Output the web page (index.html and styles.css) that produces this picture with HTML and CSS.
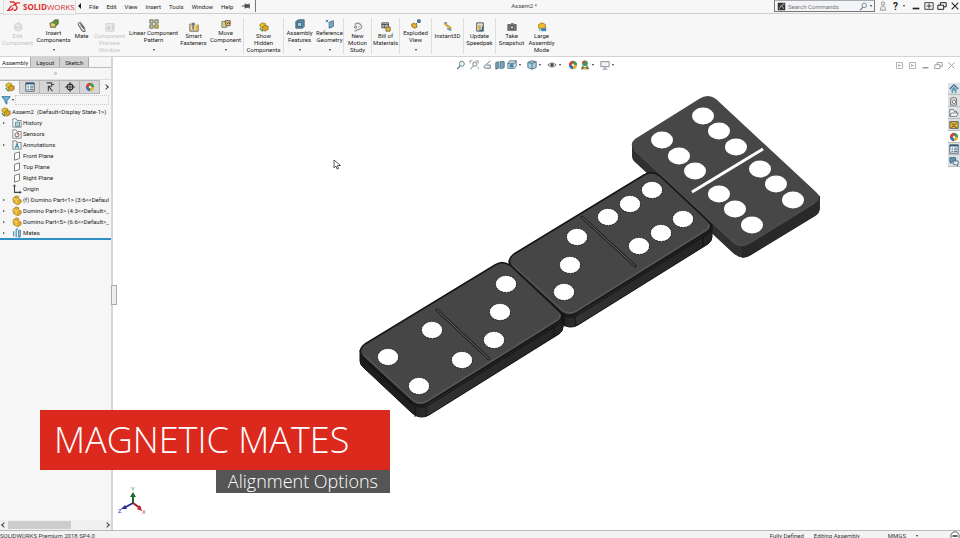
FILE: index.html
```
<!DOCTYPE html>
<html lang="en">
<head>
    <meta charset="utf-8">
    <title>Assem2 - SOLIDWORKS</title>
    <link rel="stylesheet" href="styles.css">
</head>
<body>
    <!-- icon sprite -->
    <svg class="sprite">
        <symbol id="i-part" viewBox="0 0 12 12"><path d="M1 4l4-3 3 1v3l3 1v3l-4 3-5-3z" fill="#e3ac27" stroke="#8a6414" stroke-width=".7"/><path d="M1 4l4 2 3-1M5 6v4" fill="none" stroke="#fbe08a"/></symbol>
        <symbol id="i-asm" viewBox="0 0 12 12"><path d="M4 1l4 1v4l-4 1-3-2V3z" fill="#e8c02d" stroke="#8a6a18" stroke-width=".7"/><path d="M7 4l4 1v4L7 11 4 9V6z" fill="#d9a520" stroke="#6d5a22" stroke-width=".7"/><path d="M1 7l2 3 2 1" fill="none" stroke="#4d8a50" stroke-width="1.5"/></symbol>
        <symbol id="i-folder" viewBox="0 0 12 12"><path d="M1 11V1h4l1 2h5v8z" fill="#fff" stroke="#777"/><path d="M4 5h5v5H4z" fill="#dcebf4" stroke="#3f7696"/><path d="M5.500 7h2M5.500 8.500h2" stroke="#3f7696" stroke-width=".7"/></symbol>
        <symbol id="i-sensor" viewBox="0 0 12 12"><path d="M1 11V1h4l1 2h5v8z" fill="#fff" stroke="#777"/><circle cx="6" cy="7" r="2.500" fill="none" stroke="#444"/><path d="M6 7l2-2" stroke="#b33"/></symbol>
        <symbol id="i-note" viewBox="0 0 12 12"><path d="M1 11V1h4l1 2h5v8z" fill="#e9f3f8" stroke="#777"/><path d="M4 10l2-6 2 6M4.500 8h3" fill="none" stroke="#1f6d97"/></symbol>
        <symbol id="i-plane" viewBox="0 0 12 12"><path d="M3 3l6-2v8l-6 2z" fill="#fff" stroke="#666"/></symbol>
        <symbol id="i-origin" viewBox="0 0 12 12"><path d="M3 1v9h8" fill="none" stroke="#444" stroke-width="1.300"/><path d="M1.500 3L3 1l1.500 2M9 8.500L11 10l-2 1.500" fill="none" stroke="#444"/></symbol>
        <symbol id="i-mates" viewBox="0 0 12 12"><path d="M2 10V4M5 11V3q0-2 2-2M8 11V4q0-2 2-1v6q0 2-2 2" fill="none" stroke="#4389b5" stroke-width="1.400"/></symbol>
        <symbol id="i-clip" viewBox="0 0 12 12"><path d="M4 3l5 6q1.500 2 0 2.500T6 10L2 4q-1-2 .5-3T5 2l4.500 6" fill="none" stroke="#666" stroke-width="1.300"/></symbol>
        <symbol id="i-insert" viewBox="0 0 12 12"><path d="M1 5l4-1h4l-1 6H2z" fill="#c9bd62" stroke="#5d5f2a"/><path d="M4 4l3-3h4v5l-3 2" fill="#6f8f3c" stroke="#44662a"/><path d="M3 7h4" stroke="#f3e9a0"/></symbol>
        <symbol id="i-faded" viewBox="0 0 12 12"><path d="M1 2h10v9H1z" fill="#e9e9e9" stroke="#ccc"/><path d="M3 5h3v4H3zM8 4h2v5H8z" fill="#ccc"/></symbol>
        <symbol id="i-fadedpart" viewBox="0 0 12 12"><path d="M3 2l4-1 3 2v3l1 2-4 3-5-2V6z" fill="#e6e6e6" stroke="#ccc"/><path d="M3 6l4 1 3-1" fill="none" stroke="#ccc"/></symbol>
        <symbol id="i-pattern" viewBox="0 0 12 12"><path d="M1 1h4v4H1zM7 1h4v4H7zM1 7h4v4H1z" fill="#c7cfb0" stroke="#59654a"/><path d="M7 7h4v4H7z" fill="#ecc53f" stroke="#59654a"/></symbol>
        <symbol id="i-fasten" viewBox="0 0 12 12"><path d="M1 2v9h10V3" fill="#e8d9a0" stroke="#555"/><path d="M3 1h4v3H6v5H4V4H3z" fill="#777"/><path d="M8 4h3v5H8z" fill="#e5b52c"/></symbol>
        <symbol id="i-move" viewBox="0 0 12 12"><path d="M1 3h6v7H1z" fill="#d8c88e" stroke="#777"/><path d="M5 2h6v6H6z" fill="#eebc55" stroke="#555"/><path d="M7 6l2-2 2 2" fill="none" stroke="#333"/></symbol>
        <symbol id="i-feature" viewBox="0 0 12 12"><path d="M1 3l3-2h7v8l-2 2H1z" fill="#5a8fae" stroke="#35586d"/><path d="M3 4h5v5H3z" fill="#a9cadb" stroke="#35586d"/></symbol>
        <symbol id="i-geometry" viewBox="0 0 12 12"><path d="M5 4l5-2v7l-5 2z" fill="#76abc8" stroke="#326582"/><path d="M1 1l3 3M4 1L1 4" stroke="#326582"/></symbol>
        <symbol id="i-motion" viewBox="0 0 12 12"><path d="M2 3q4-3 7 0t0 5l-7 3" fill="none" stroke="#999" stroke-width="1.500"/><circle cx="3" cy="6" r="1.500" fill="#ccc" stroke="#777"/><path d="M6 7l3-3" stroke="#c98e72"/></symbol>
        <symbol id="i-bom" viewBox="0 0 12 12"><path d="M1 1h8v6H1z" fill="#b7c4cc" stroke="#444"/><path d="M1 3h8M4 3v4" stroke="#444"/><path d="M6 6h5v5H6z" fill="#e2bc42" stroke="#6d5a22"/></symbol>
        <symbol id="i-explode" viewBox="0 0 12 12"><path d="M1 6l3-1 3 2v3l-3 1-3-2z" fill="#e5b52c" stroke="#8a6414"/><path d="M8 1h3v3H8z" fill="#4d86ad" stroke="#2d5673"/><path d="M6 6l2-2" stroke="#555"/></symbol>
        <symbol id="i-instant" viewBox="0 0 12 12"><path d="M2 1l8 6-1 2-7-6z" fill="#e9bd33" stroke="#9a7617" stroke-width=".7"/><path d="M5 8l5 2M2 1h3" stroke="#4c87a8" stroke-width="1.500"/></symbol>
        <symbol id="i-update" viewBox="0 0 12 12"><path d="M2 1h8v10H2z" fill="#d9e0e2" stroke="#444"/><path d="M4 4h3v5H4z" fill="#dba923"/><path d="M9 5v5H5" fill="none" stroke="#2e6d93" stroke-width="1.500"/></symbol>
        <symbol id="i-camera" viewBox="0 0 12 12"><path d="M1 3h3l1-1h3l1 1h2v7H1z" fill="#777" stroke="#555"/><circle cx="6" cy="6.500" r="2" fill="#ddd" stroke="#333"/></symbol>
        <symbol id="i-large" viewBox="0 0 12 12"><path d="M2 3l4-2 4 2v4l-4 2-4-2z" fill="#f0bd28" stroke="#a57712"/><path d="M5 7h6v4H5z" fill="#438ab0"/><path d="M2 8l2 3" stroke="#438ab0"/></symbol>
        <symbol id="i-list" viewBox="0 0 12 12"><path d="M1 1h10v10H1z" fill="#fff" stroke="#345"/><path d="M1 2h10" stroke="#2d5f80" stroke-width="2"/><path d="M3 5h2M6 5h4M3 7h2M6 7h4M3 9h2M6 9h4" stroke="#2d5f80"/></symbol>
        <symbol id="i-config" viewBox="0 0 12 12"><path d="M2 1h6v4H4v6M4 5l5 6M8 3h3" fill="none" stroke="#444" stroke-width="1.300"/></symbol>
        <symbol id="i-target" viewBox="0 0 12 12"><circle cx="6" cy="6" r="3.500" fill="none" stroke="#222" stroke-width="1.300"/><path d="M6 0v12M0 6h12" stroke="#222"/></symbol>
        <symbol id="i-ball" viewBox="0 0 12 12"><path d="M6 6V1a5 5 0 0 1 5 5z" fill="#3e9e58"/><path d="M6 6h5a5 5 0 0 1-5 5z" fill="#e0b32f"/><path d="M6 6v5a5 5 0 0 1-5-5z" fill="#3b71ae"/><path d="M6 6H1a5 5 0 0 1 5-5z" fill="#d94434"/><circle cx="6" cy="6" r="1.500" fill="#f4e8e4"/></symbol>
        <symbol id="i-funnel" viewBox="0 0 12 12"><path d="M1 2h10L7 7v4L5 9V7z" fill="#76b5da" stroke="#1f6592"/></symbol>
        <symbol id="i-zoom" viewBox="0 0 12 12"><circle cx="7" cy="4.500" r="3" fill="#edf5f9" stroke="#56707f"/><path d="M5 7l-3.500 4" stroke="#56707f" stroke-width="1.500"/></symbol>
        <symbol id="i-zoomarea" viewBox="0 0 12 12"><path d="M1 4V1h3M8 1h3v3M11 8v3" fill="none" stroke="#888"/><circle cx="7" cy="5" r="2.500" fill="#fff" stroke="#56707f"/><path d="M5 7l-3 4" stroke="#56707f"/></symbol>
        <symbol id="i-prev" viewBox="0 0 12 12"><path d="M10 1L3 7q-2 2 1 3h6V6H6" fill="#dfe8ec" stroke="#5f7782"/></symbol>
        <symbol id="i-section" viewBox="0 0 12 12"><path d="M1 3l3-1v8l-3 1zM6 2h5v7l-2 1H6z" fill="#78a9c1" stroke="#3f6477"/></symbol>
        <symbol id="i-views" viewBox="0 0 12 12"><path d="M1 4l2-3h8v6l-2 3H1z" fill="#dbe9ef" stroke="#43687c"/><path d="M3 5h5v4H3z" fill="#4484a8"/><path d="M1 4h8l2-3" stroke="#43687c" fill="none"/></symbol>
        <symbol id="i-cube" viewBox="0 0 12 12"><path d="M1 3l4-2 6 1v7l-5 2-5-2z" fill="#a8d0df" stroke="#43687c"/><path d="M1 3l5 1 5-2M6 4v7" fill="none" stroke="#43687c"/></symbol>
        <symbol id="i-eye" viewBox="0 0 12 12"><path d="M1 6q5-5 10 0-5 5-10 0z" fill="#eee" stroke="#666"/><circle cx="6" cy="6" r="2" fill="#444"/></symbol>
        <symbol id="i-scene" viewBox="0 0 12 12"><circle cx="6" cy="4" r="3.500" fill="#3e9e58"/><path d="M6 .5A3.500 3.500 0 0 0 2.500 4H6z" fill="#d94434"/><path d="M1 11l2-4 3 2 3-2 2 4z" fill="#5e6a4c"/><path d="M4 9h4v2H4z" fill="#e0b32f"/></symbol>
        <symbol id="i-monitor" viewBox="0 0 12 12"><path d="M1 2h10v6H1zM6 8v3M3 11h6" fill="#f2f5f7" stroke="#778"/></symbol>
        <symbol id="i-user" viewBox="0 0 12 12"><circle cx="6" cy="3" r="2" fill="#eee" stroke="#888"/><path d="M3 11q0-5 3-5t3 5z" fill="#eee" stroke="#888"/></symbol>
        <symbol id="i-min" viewBox="0 0 12 12"><path d="M2 9h8" stroke="currentColor" stroke-width="2"/></symbol>
        <symbol id="i-fit" viewBox="0 0 12 12"><path d="M1 2h10v8H1zM3 6h6M6 3v6" fill="none" stroke="currentColor"/></symbol>
        <symbol id="i-restore" viewBox="0 0 12 12"><path d="M1 5h7v5H1zM4 5V2h7v5H8" fill="none" stroke="currentColor" stroke-width="1.200"/></symbol>
        <symbol id="i-close" viewBox="0 0 12 12"><path d="M2 2l8 8M10 2l-8 8" stroke="currentColor" stroke-width="1.300"/></symbol>
        <symbol id="i-dock" viewBox="0 0 12 12"><path d="M2 2h8v8H2zM5 6h3M5 4v4" fill="none" stroke="currentColor"/></symbol>
        <symbol id="i-pin" viewBox="0 0 12 12"><path d="M1 6h4M5 3v6M5 4.500h4v3H5M10 3v6" fill="#555" stroke="#333"/></symbol>
        <symbol id="i-home" viewBox="0 0 12 12"><path d="M1 6l5-5 5 5" fill="none" stroke="#3f6e8c" stroke-width="1.500"/><path d="M3 6v5h2V8h2v3h2V6L6 3z" fill="#6b9cb8"/></symbol>
        <symbol id="i-library" viewBox="0 0 12 12"><path d="M2 3q4-3 7 0v8H2z" fill="#ddd" stroke="#666"/><circle cx="6" cy="7" r="2" fill="#fff" stroke="#666"/></symbol>
        <symbol id="i-open" viewBox="0 0 12 12"><path d="M1 10V2h4l1 2h3v2M1 10l2-4h8l-2 4z" fill="#fff" stroke="#667"/></symbol>
        <symbol id="i-palette" viewBox="0 0 12 12"><path d="M1 2h10v8H1z" fill="#e9b92f" stroke="#444"/><path d="M3 4l3 2 3-2M3 9l2-2 4 2" stroke="#444" fill="none"/></symbol>
        <symbol id="i-forum" viewBox="0 0 12 12"><path d="M1 2h7v5H4L2 9V7H1z" fill="#5f93b2" stroke="#3c6178"/><path d="M5 6h6v4h-1v2L8 10H5z" fill="#e9f2f6" stroke="#3c6178"/></symbol>
    </svg>

    <header class="titlebar">
        <div class="logo">
            <svg viewBox="0 0 18 14"><path d="M5 1h4q4 2-1 4M7 5l-4 5q6 0 5-3M16 2h-3q-3 1-1 3.500T11 10H9" fill="none" stroke="#d8302d" stroke-width="1.500"/></svg>
            <span class="logo-text"><b>SOLID</b>WORKS</span>
        </div>
        <nav class="menu">
            <button aria-label="Collapse menu"><span class="tri-left"></span></button>
            <button>File</button>
            <button>Edit</button>
            <button>View</button>
            <button>Insert</button>
            <button>Tools</button>
            <button>Window</button>
            <button>Help</button>
            <button class="pin" aria-label="Pin menu"><svg><use href="#i-pin"/></svg></button>
        </nav>
        <div class="doc-title">Assem2 *</div>
        <div class="search">
            <svg viewBox="0 0 12 12"><path d="M1 1h10v10H1z" fill="#333"/><path d="M3 9l3-5 3 5M7 3h3" fill="none" stroke="#ddd"/></svg>
            <input type="text" placeholder="Search Commands" aria-label="Search Commands">
            <svg><use href="#i-zoom"/></svg>
            <span class="caret"></span>
        </div>
        <div class="window-controls">
            <button aria-label="Login"><svg><use href="#i-user"/></svg></button>
            <button class="help" aria-label="Help">?<span class="caret"></span></button>
            <button aria-label="Minimize"><svg><use href="#i-min"/></svg></button>
            <button aria-label="Span displays"><svg><use href="#i-fit"/></svg></button>
            <button aria-label="Restore"><svg><use href="#i-restore"/></svg></button>
            <button aria-label="Close"><svg><use href="#i-close"/></svg></button>
        </div>
    </header>

    <div class="ribbon">
        <button class="tool w36 disabled" disabled><svg><use href="#i-fadedpart"/></svg><span>Edit<br>Component</span></button>
        <button class="tool w36 has-menu"><svg><use href="#i-insert"/></svg><span>Insert<br>Components</span><span class="caret"></span></button>
        <button class="tool w20"><svg><use href="#i-clip"/></svg><span>Mate</span></button>
        <button class="tool w36 disabled" disabled><svg><use href="#i-faded"/></svg><span>Component<br>Preview<br>Window</span></button>
        <button class="tool w52 has-menu"><svg><use href="#i-pattern"/></svg><span>Linear Component<br>Pattern</span><span class="caret"></span></button>
        <button class="tool w28"><svg><use href="#i-fasten"/></svg><span>Smart<br>Fasteners</span></button>
        <button class="tool w36 has-menu sep"><svg><use href="#i-move"/></svg><span>Move<br>Component</span><span class="caret"></span></button>
        <button class="tool w40 sep"><svg><use href="#i-asm"/></svg><span>Show<br>Hidden<br>Components</span></button>
        <button class="tool w32 has-menu"><svg><use href="#i-feature"/></svg><span>Assembly<br>Features</span><span class="caret"></span></button>
        <button class="tool w28 has-menu sep"><svg><use href="#i-geometry"/></svg><span>Reference<br>Geometry</span><span class="caret"></span></button>
        <button class="tool w28 sep"><svg><use href="#i-motion"/></svg><span>New<br>Motion<br>Study</span></button>
        <button class="tool w28 sep"><svg><use href="#i-bom"/></svg><span>Bill of<br>Materials</span></button>
        <button class="tool w32 has-menu sep"><svg><use href="#i-explode"/></svg><span>Exploded<br>View</span><span class="caret"></span></button>
        <button class="tool w32 sep"><svg><use href="#i-instant"/></svg><span>Instant3D</span></button>
        <button class="tool w32 sep"><svg><use href="#i-update"/></svg><span>Update<br>Speedpak</span></button>
        <button class="tool w32"><svg><use href="#i-camera"/></svg><span>Take<br>Snapshot</span></button>
        <button class="tool w28"><svg><use href="#i-large"/></svg><span>Large<br>Assembly<br>Mode</span></button>
    </div>

    <main class="workspace">
        <aside class="panel">
            <div class="doc-tabs">
                <button class="active">Assembly</button>
                <button>Layout</button>
                <button>Sketch</button>
            </div>
            <div class="grip"><span></span></div>
            <div class="manager-tabs">
                <button class="active" aria-label="FeatureManager"><svg><use href="#i-asm"/></svg></button>
                <button aria-label="PropertyManager"><svg><use href="#i-list"/></svg></button>
                <button aria-label="ConfigurationManager"><svg><use href="#i-config"/></svg></button>
                <button aria-label="DimXpertManager"><svg><use href="#i-target"/></svg></button>
                <button aria-label="DisplayManager"><svg><use href="#i-ball"/></svg></button>
                <button class="more" aria-label="More"><span class="chevron"></span></button>
            </div>
            <div class="filter">
                <svg><use href="#i-funnel"/></svg><span class="caret"></span>
                <input type="text" aria-label="Filter">
            </div>
            <ul class="tree">
                <li class="root"><svg><use href="#i-asm"/></svg>Assem2&nbsp; (Default&lt;Display State-1&gt;)</li>
                <li class="branch"><svg><use href="#i-folder"/></svg>History</li>
                <li><svg><use href="#i-sensor"/></svg>Sensors</li>
                <li class="branch"><svg><use href="#i-note"/></svg>Annotations</li>
                <li><svg><use href="#i-plane"/></svg>Front Plane</li>
                <li><svg><use href="#i-plane"/></svg>Top Plane</li>
                <li><svg><use href="#i-plane"/></svg>Right Plane</li>
                <li><svg><use href="#i-origin"/></svg>Origin</li>
                <li class="branch"><svg><use href="#i-part"/></svg>(f) Domino Part&lt;1&gt; (3:6&lt;&lt;Defaul</li>
                <li class="branch"><svg><use href="#i-part"/></svg>Domino Part&lt;3&gt; (4:3&lt;&lt;Default&gt;_</li>
                <li class="branch"><svg><use href="#i-part"/></svg>Domino Part&lt;5&gt; (6:6&lt;&lt;Default&gt;_</li>
                <li class="branch"><svg><use href="#i-mates"/></svg>Mates</li>
            </ul>
            <div class="scrollbar">
                <span class="chevron left"></span>
                <div class="track"><div class="thumb"></div></div>
                <span class="chevron"></span>
            </div>
            <button class="splitter" aria-label="Collapse panel"></button>
        </aside>

        <section class="viewport">
            <svg class="model" viewBox="113 57 847 473">
                <defs>
                    <linearGradient id="side" x1="0" x2="1">
                        <stop offset="0" stop-color="#1c1c1c"/>
                        <stop offset=".25" stop-color="#202020"/>
                        <stop offset=".35" stop-color="#333"/>
                        <stop offset=".6" stop-color="#2b2b2b"/>
                        <stop offset="1" stop-color="#242424"/>
                    </linearGradient>
                    <g id="tile">
                        <path d="M360 350V361Q360 365 364 368L412 413Q420 420 429 415L559 334Q563 331 563 327V315L502 262z" fill="url(#side)" stroke="#111"/>
                        <path d="M365 344L495 265Q503 260 511 266L559 311Q565 317 558 322L428 403Q420 408 412 402L363 357Q357 350 365 344z" fill="#464646" stroke="#151515" stroke-width="1.500"/>
                        <path d="M364 355L413 400Q420 405 427 401L557 320Q561 317 560 314" fill="none" stroke="#666" stroke-width=".8"/>
                        <path d="M363 359L412 404Q420 410 429 405L559 324Q562 322 563 319M415 407v10M426 407v10M554 327v10" fill="none" stroke="#0c0c0c" stroke-width=".8"/>
                    </g>
                </defs>

                <!-- 6:6 -->
                <path d="M632 144V156Q632 160 636 163L733 253Q742 261 751 255L815 216Q820 213 820 208V196z" fill="#303030"/>
                <path d="M742 247L819 199V208Q820 213 815 216L751 255Q746 258 742 258z" fill="#292929"/>
                <path d="M635 139L699 99Q708 93 716 99L816 192Q823 198 815 203L750 243Q742 248 734 243L634 150Q629 144 635 139z" fill="#474747"/>
                <path d="M635 151L734 243Q742 248 750 243L815 203" fill="none" stroke="#595959" stroke-width=".8"/>
                <path d="M692 192L763 149" stroke="#fff" stroke-width="3"/>
                <g class="pips">
                    <ellipse cx="703" cy="116" rx="11" ry="8.500"/><ellipse cx="719" cy="131" rx="11" ry="8.500"/><ellipse cx="736" cy="147" rx="11" ry="8.500"/>
                    <ellipse cx="662" cy="140" rx="11" ry="8.500"/><ellipse cx="679" cy="156" rx="11" ry="8.500"/><ellipse cx="695" cy="171" rx="11" ry="8.500"/>
                    <ellipse cx="760" cy="169" rx="11" ry="8.500"/><ellipse cx="776" cy="184" rx="11" ry="8.500"/><ellipse cx="793" cy="200" rx="11" ry="8.500"/>
                    <ellipse cx="719" cy="194" rx="11" ry="8.500"/><ellipse cx="735" cy="209" rx="11" ry="8.500"/><ellipse cx="752" cy="225" rx="11" ry="8.500"/>
                </g>

                <!-- 3:6 -->
                <use href="#tile" x="149" y="-90"/>
                <path class="groove" d="M582 217L635 266"/>
                <path class="groove-light" d="M582 217L635 266"/>
                <g class="pips cut">
                    <ellipse cx="577" cy="237" rx="10.500" ry="8.500"/><ellipse cx="570" cy="265" rx="10.500" ry="8.500"/><ellipse cx="564" cy="292" rx="10.500" ry="8.500"/>
                    <ellipse cx="608" cy="217" rx="10.500" ry="8.500"/><ellipse cx="630" cy="204" rx="10.500" ry="8.500"/><ellipse cx="652" cy="190" rx="10.500" ry="8.500"/>
                    <ellipse cx="639" cy="246" rx="10.500" ry="8.500"/><ellipse cx="661" cy="233" rx="10.500" ry="8.500"/><ellipse cx="683" cy="219" rx="10.500" ry="8.500"/>
                </g>

                <!-- 4:3 -->
                <use href="#tile"/>
                <path class="groove" d="M437 310L489 359"/>
                <path class="groove-light" d="M437 310L489 359"/>
                <g class="pips cut">
                    <ellipse cx="388" cy="357" rx="10.500" ry="8.500"/><ellipse cx="432" cy="330" rx="10.500" ry="8.500"/>
                    <ellipse cx="419" cy="386" rx="10.500" ry="8.500"/><ellipse cx="462" cy="360" rx="10.500" ry="8.500"/>
                    <ellipse cx="506" cy="284" rx="10.500" ry="8.500"/><ellipse cx="500" cy="312" rx="10.500" ry="8.500"/><ellipse cx="494" cy="340" rx="10.500" ry="8.500"/>
                </g>

                <!-- triad -->
                <path d="M133 503V494" stroke="#1b6b2b" stroke-width="2"/>
                <path d="M130 497l3-5 3 5z" fill="#1b6b2b"/>
                <path d="M133 503L124 508" stroke="#2a2f9c" stroke-width="2"/>
                <path d="M121 509l4-4 2 4z" fill="#2a2f9c"/>
                <path d="M133 503L140 508" stroke="#a01c28" stroke-width="2"/>
                <path d="M142 511l-5-2 3-4z" fill="#c2202c"/>
                <text class="axis-y" x="131" y="491">Y</text>
                <text class="axis-z" x="118" y="513">Z</text>
                <text class="axis-x" x="142" y="514">X</text>

                <path d="M334 160v8l2-2 1 3 1.500-.5-1-3h3z" fill="#fff" stroke="#333" stroke-width=".8"/>
            </svg>

            <div class="view-tools">
                <button aria-label="Zoom to fit"><svg><use href="#i-zoom"/></svg></button>
                <button aria-label="Zoom to area"><svg><use href="#i-zoomarea"/></svg></button>
                <button aria-label="Previous view"><svg><use href="#i-prev"/></svg></button>
                <button aria-label="Section view"><svg><use href="#i-section"/></svg></button>
                <button class="drop" aria-label="View orientation"><svg><use href="#i-views"/></svg><span class="caret"></span></button>
                <button class="drop" aria-label="Display style"><svg><use href="#i-cube"/></svg><span class="caret"></span></button>
                <button class="drop" aria-label="Hide/show items"><svg><use href="#i-eye"/></svg><span class="caret"></span></button>
                <button aria-label="Edit appearance"><svg><use href="#i-ball"/></svg></button>
                <button class="drop" aria-label="Apply scene"><svg><use href="#i-scene"/></svg><span class="caret"></span></button>
                <button class="drop" aria-label="View settings"><svg><use href="#i-monitor"/></svg><span class="caret"></span></button>
            </div>
            <div class="doc-controls">
                <button aria-label="Dock left"><svg><use href="#i-dock"/></svg></button>
                <button aria-label="Dock right"><svg><use href="#i-dock"/></svg></button>
                <button aria-label="Minimize document"><svg><use href="#i-min"/></svg></button>
                <button aria-label="Restore document"><svg><use href="#i-restore"/></svg></button>
                <button aria-label="Close document"><svg><use href="#i-close"/></svg></button>
            </div>
            <div class="task-pane">
                <button aria-label="Resources"><svg><use href="#i-home"/></svg></button>
                <button aria-label="Design library"><svg><use href="#i-library"/></svg></button>
                <button aria-label="File explorer"><svg><use href="#i-open"/></svg></button>
                <button aria-label="View palette"><svg><use href="#i-palette"/></svg></button>
                <button class="active" aria-label="Appearances"><svg><use href="#i-ball"/></svg></button>
                <button aria-label="Custom properties"><svg><use href="#i-list"/></svg></button>
                <button aria-label="Forum"><svg><use href="#i-forum"/></svg></button>
            </div>
        </section>

        <div class="banner">
            <h1>MAGNETIC MATES</h1>
            <h2>Alignment Options</h2>
        </div>
    </main>

    <footer class="statusbar">
        <span class="product">SOLIDWORKS Premium 2018 SP4.0</span>
        <span>Fully Defined</span>
        <span>Editing Assembly</span>
        <span class="units">MMGS</span>
        <span class="caret"></span>
        <svg viewBox="0 0 12 12"><circle cx="6" cy="6" r="5" fill="#fff" stroke="#444"/><path d="M3 6h6" stroke="#444" stroke-width="2"/></svg>
    </footer>
</body>
</html>
```
FILE: styles.css
```
* {
    box-sizing: border-box;
}
body {
    font-family: Roboto, "Noto Sans", sans-serif;
    font-size: 6px;
    line-height: 7px;
    color: #222;
    margin: 0;
    height: 100vh;
    display: flex;
    flex-direction: column;
    overflow: hidden;
    background: #fff;
}
button {
    font: inherit;
    color: inherit;
    margin: 0;
    padding: 0;
    border: none;
    background: none;
    cursor: pointer;
}
input {
    font: inherit;
    min-width: 0;
    padding: 0;
    border: none;
    outline: none;
    background: transparent;
}
svg {
    display: block;
    flex: none;
    width: 10px;
    height: 10px;
}
.sprite {
    position: absolute;
    width: 0;
    height: 0;
}
.caret {
    display: inline-block;
    width: 0;
    height: 0;
    border: 1px solid transparent;
    border-top: 2px solid #333;
    border-bottom: none;
}
.chevron {
    width: 4px;
    height: 4px;
    border: solid #444;
    border-width: 1px 1px 0 0;
    transform: rotate(45deg);
}
.chevron.left {
    transform: rotate(225deg);
}

/* title bar */
.titlebar {
    display: flex;
    flex: none;
    height: 14px;
    background: #f7f7f7;
    border-bottom: 1px solid #cfcfcf;
}
.logo {
    display: flex;
    align-items: center;
    gap: 1px;
    width: 73px;
    height: 15px;
    margin-left: 3px;
    padding-left: 1px;
    background: #f4f4f4;
    border: 1px solid #ddd;
    border-top: none;
    z-index: 1;
}
.logo svg {
    width: 17px;
    height: 13px;
}
.logo-text {
    color: #d8302d;
    font-family: "Open Sans", sans-serif;
    font-size: 8px;
    line-height: 12px;
}
.menu {
    display: flex;
    align-items: center;
    gap: 8px;
    height: 12px;
    padding: 0 4px 0 2px;
    border-right: 1px solid #777;
}
.tri-left {
    display: block;
    border: 3px solid transparent;
    border-left: none;
    border-right: 3px solid #222;
}
.doc-title {
    flex: 1;
    padding-left: 18px;
    text-align: center;
    line-height: 12px;
    color: #444;
}
.search {
    display: flex;
    align-items: center;
    gap: 2px;
    width: 101px;
    height: 12px;
    padding: 0 2px;
    background: #f2f4f8;
    border: 1px solid #777;
    border-top-color: #aaa;
}
.search svg {
    width: 9px;
    height: 9px;
}
.search input {
    flex: 1;
}
.search input::placeholder {
    color: #777;
}
.window-controls {
    display: flex;
    align-items: center;
    gap: 3px;
    height: 12px;
    margin-left: 3px;
}
.window-controls .help {
    display: flex;
    align-items: center;
    gap: 5px;
    width: 17px;
    padding-left: 2px;
    font-size: 10px;
    font-weight: bold;
}

/* ribbon */
.ribbon {
    display: flex;
    flex: none;
    height: 43px;
    padding: 4px 0 2px;
    background: #f7f7f7;
    border-bottom: 1px solid #d4d4d4;
}
.tool {
    display: flex;
    flex-direction: column;
    align-items: center;
    flex: none;
    padding-top: 4px;
    white-space: nowrap;
    text-align: center;
    border-right: 1px solid transparent;
}
.tool.has-menu {
    position: relative;
    padding-top: 1px;
}
.tool .caret {
    position: absolute;
    bottom: 3px;
}
.tool.sep {
    border-right-color: #ddd;
}
.tool.disabled {
    color: #c4c4c4;
}
.w20 { width: 20px; }
.w28 { width: 28px; }
.w32 { width: 32px; }
.w36 { width: 36px; }
.w40 { width: 40px; }
.w52 { width: 52px; }

/* left panel */
.workspace {
    display: flex;
    flex: 1;
    min-height: 0;
    position: relative;
}
.panel {
    display: flex;
    flex-direction: column;
    flex: none;
    width: 113px;
    position: relative;
    background: #f6f6f6;
    border-right: 2px solid #d6d6d6;
}
.doc-tabs {
    display: flex;
    height: 11px;
    border-bottom: 1px solid #bbb;
}
.doc-tabs button {
    padding: 0 5px;
    background: #d2d2d2;
    border-right: 1px solid #aaa;
}
.doc-tabs .active {
    padding: 0 2px;
    background: #fff;
}
.grip {
    display: flex;
    align-items: center;
    justify-content: center;
    height: 12px;
    border-bottom: 1px solid #ddd;
}
.grip span {
    width: 3px;
    height: 3px;
    border: 1px solid #aaa;
    border-radius: 50%;
}
.manager-tabs {
    display: flex;
    height: 14px;
}
.manager-tabs button {
    display: flex;
    align-items: center;
    justify-content: center;
    width: 20px;
    background: #d6d6d6;
    border: 1px solid #b5b5b5;
    border-left: none;
}
.manager-tabs .active {
    background: #f6f6f6;
    border-bottom-color: #f6f6f6;
}
.manager-tabs .more {
    flex: 1;
    background: none;
    border: none;
}
.filter {
    display: flex;
    align-items: center;
    gap: 1px;
    height: 12px;
    padding: 0 2px 0 1px;
}
.filter input {
    flex: 1;
    height: 10px;
    border: 1px dotted #ccc;
}
.tree {
    flex: none;
    margin: 0;
    padding: 0;
    list-style: none;
    border-bottom: 2px solid #2f8fc4;
}
.tree li {
    display: flex;
    align-items: center;
    gap: 1px;
    height: 11px;
    padding-left: 12px;
    position: relative;
    overflow: hidden;
    white-space: nowrap;
}
.tree .root {
    padding-left: 1px;
}
.tree .branch::before {
    content: "";
    position: absolute;
    left: 3px;
    border: 1px solid transparent;
    border-left: 2px solid #444;
    border-right: none;
}
.scrollbar {
    display: flex;
    align-items: center;
    gap: 2px;
    height: 10px;
    margin-top: auto;
    padding: 0 2px;
    background: #f0f0f0;
}
.track {
    flex: 1;
}
.thumb {
    width: 66%;
    height: 8px;
    background: #cdcdcd;
}
.splitter {
    position: absolute;
    top: 228px;
    right: -6px;
    width: 6px;
    height: 20px;
    background: #eee;
    border: 1px solid #aaa;
    z-index: 1;
}

/* graphics area */
.viewport {
    flex: 1;
    position: relative;
    background: #fff;
}
.model {
    position: absolute;
    inset: 0;
    width: 100%;
    height: 100%;
}
.pips {
    fill: #fff;
}
.pips.cut {
    stroke: #222;
    stroke-width: 1px;
    stroke-dasharray: 2 1;
}
.groove {
    stroke: #222;
    stroke-width: 3px;
    stroke-linecap: round;
    stroke-dasharray: 5 1;
}
.groove-light {
    stroke: #6a6a6a;
    stroke-width: 1px;
}
.axis-x { fill: #e0505a; }
.axis-y { fill: #4a9a58; }
.axis-z { fill: #3038b0; }
.view-tools {
    display: flex;
    justify-content: center;
    position: relative;
    padding-top: 2px;
}
.view-tools button,
.doc-controls button {
    display: flex;
    align-items: center;
    justify-content: center;
    width: 13px;
    height: 12px;
}
.view-tools .drop {
    justify-content: flex-start;
    gap: 2px;
    width: 20px;
    padding-left: 1px;
}
.doc-controls {
    display: flex;
    position: absolute;
    top: 2px;
    right: 2px;
    color: #999;
}
.doc-controls svg {
    width: 9px;
    height: 9px;
}
.task-pane {
    position: absolute;
    top: 26px;
    right: 0;
    width: 12px;
}
.task-pane button {
    display: block;
    width: 12px;
    height: 12px;
    padding: 0 1px;
    background: #dde1e4;
    border-bottom: 1px solid #bbb;
}
.task-pane .active {
    background: #fff;
}

/* caption */
.banner {
    display: flex;
    flex-direction: column;
    align-items: flex-end;
    position: absolute;
    left: 40px;
    bottom: 37px;
    width: 350px;
    color: #fff;
    font-family: "Open Sans", sans-serif;
}
.banner h1 {
    width: 100%;
    margin: 0;
    padding: 0 14px;
    background: #db291e;
    font-size: 36px;
    font-weight: 300;
    line-height: 60px;
    white-space: nowrap;
}
.banner h2 {
    margin: 0;
    padding: 0 12px;
    background: #555;
    font-size: 18px;
    font-weight: 300;
    line-height: 23px;
}

/* status bar */
.statusbar {
    display: flex;
    flex: none;
    gap: 10px;
    height: 8px;
    line-height: 9px;
    overflow: hidden;
    background: #f3f3f3;
    border-top: 1px solid #bbb;
    color: #333;
}
.statusbar .product {
    flex: 1;
}
.statusbar .units {
    margin-left: 18px;
}
.statusbar .caret {
    margin-top: 4px;
}
.statusbar svg {
    margin-left: 22px;
}
```
